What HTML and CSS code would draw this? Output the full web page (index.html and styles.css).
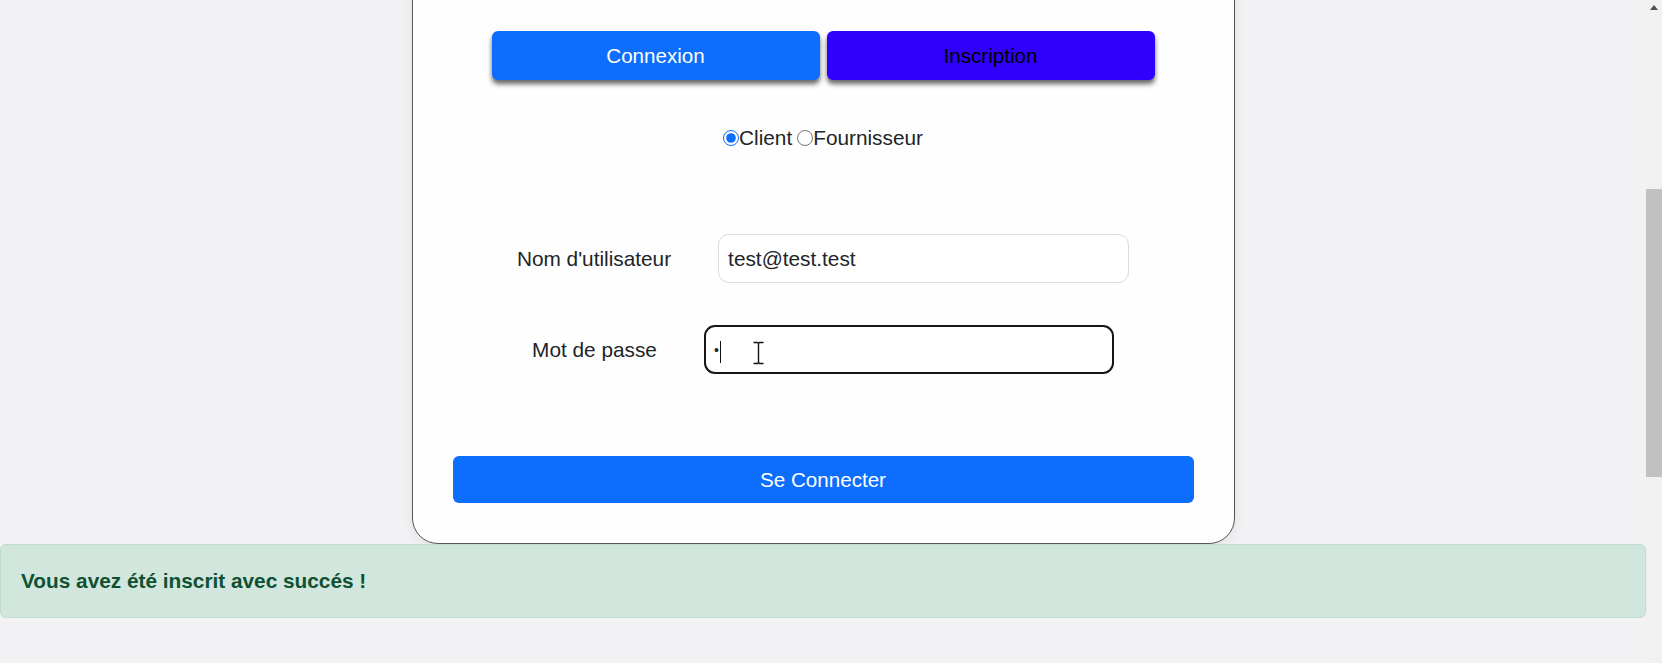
FILE: index.html
```html
<!DOCTYPE html>
<html lang="fr">
<head>
<meta charset="utf-8">
<title>Connexion</title>
<link rel="stylesheet" href="styles.css">
</head>
<body>
<div class="viewport">
  <div class="content">
    <div class="page">
      <div class="card">
        <div class="tabs">
          <button class="tab tab-login">Connexion</button>
          <button class="tab tab-signup">Inscription</button>
        </div>
        <div class="roles">
          <input type="radio" name="role" id="client" checked><label for="client">Client</label>
          <input type="radio" name="role" id="fournisseur"><label for="fournisseur">Fournisseur</label>
        </div>
        <div class="field field-user">
          <label class="field-label" for="user">Nom d'utilisateur</label>
          <input class="field-input" id="user" type="text" value="test@test.test">
        </div>
        <div class="field field-pass">
          <label class="field-label" for="pass">Mot de passe</label>
          <div class="input-wrap">
            <input class="field-input field-input-focus" id="pass" type="password" value="a">
            <span class="caret"></span>
            <svg class="ibeam" width="13" height="24" viewBox="0 0 13 24">
              <path d="M1.5 1.5h4l1 1 1-1h4M6.5 2.5v19M1.5 22.5h4l1-1 1 1h4" fill="none" stroke="#fff" stroke-width="3"/>
              <path d="M1.5 1.5h4l1 1 1-1h4M6.5 2.5v19M1.5 22.5h4l1-1 1 1h4" fill="none" stroke="#111" stroke-width="1.4"/>
            </svg>
          </div>
        </div>
        <button class="submit">Se Connecter</button>
      </div>
      <div class="alert">Vous avez été inscrit avec succés !</div>
    </div>
  </div>
  <div class="scrollbar">
    <div class="scroll-arrow"><span class="tri"></span></div>
    <div class="scroll-thumb"></div>
  </div>
</div>
</body>
</html>
```
FILE: styles.css
```css
* { box-sizing: border-box; }

html, body {
  margin: 0;
  padding: 0;
  height: 663px;
  overflow: hidden;
}

body {
  background: #f2f1f3;
  font-family: "Liberation Sans", Arial, sans-serif;
  font-size: 20.8px;
  color: #212529;
}

.viewport {
  display: flex;
  height: 663px;
}

.content {
  flex: 1;
  overflow: hidden;
}

/* simulates the scrolled position */
.page {
  margin-top: -40px;
}

.card {
  width: 50%;
  margin: 0 auto;
  background: #fefefe;
  border: 1px solid #555;
  border-radius: 26px;
  padding: 70px 40px 40px;
  box-shadow: 0 2px 12px rgba(0, 0, 0, 0.08);
}

.tabs {
  display: flex;
  justify-content: center;
  gap: 7px;
}

.tab {
  width: 328px;
  height: 49px;
  border: none;
  border-radius: 6px;
  font-family: inherit;
  font-size: 20.6px;
  box-shadow: 0 4px 5px rgba(0, 0, 0, 0.6);
  padding: 0;
}

.tab-login {
  background: #0d6efd;
  color: #fff;
}

.tab-signup {
  background: #3000ff;
  color: #000;
}

.roles {
  margin-top: 46px;
  height: 24px;
  display: flex;
  justify-content: center;
  align-items: center;
  line-height: 24px;
}

.roles input {
  margin: 0;
  width: 16px;
  height: 16px;
  accent-color: #0d6efd;
}

.roles label + input {
  margin-left: 5px;
}

.field {
  display: flex;
  justify-content: center;
  align-items: center;
  gap: 47px;
}

.field-user {
  margin-top: 84px;
}

.field-pass {
  margin-top: 42px;
}

.field-label {
  color: #212529;
}

.field-input {
  width: 411px;
  height: 49px;
  border: 1px solid #dcdcdc;
  border-radius: 11px;
  padding: 0 9px;
  font-family: inherit;
  font-size: 20.8px;
  color: #212529;
  background: #fff;
  outline: none;
}

.field-input-focus {
  width: 410px;
  border: 2px solid #161616;
  padding: 0 8px;
  font-size: 14px;
}

.input-wrap {
  position: relative;
}

.caret {
  position: absolute;
  left: 16px;
  top: 16px;
  width: 1px;
  height: 22px;
  background: #111;
}

.ibeam {
  position: absolute;
  left: 48px;
  top: 16px;
}

.submit {
  display: block;
  width: 100%;
  height: 47px;
  margin-top: 82px;
  border: none;
  border-radius: 6px;
  background: #0d6efd;
  color: #fff;
  font-family: inherit;
  font-size: 20.6px;
  padding: 0;
}

.alert {
  margin-top: 0;
  background: #d1e7dd;
  border: 1px solid #c0dccf;
  border-radius: 6px;
  padding: 20px 20px;
  line-height: 32px;
  color: #0f5132;
  font-weight: bold;
}

.scrollbar {
  width: 16px;
  background: #f1f1f1;
  display: flex;
  flex-direction: column;
}

.scroll-arrow {
  height: 16px;
  display: flex;
  justify-content: center;
  padding-top: 5px;
}

.tri {
  width: 0;
  height: 0;
  border-left: 4px solid transparent;
  border-right: 4px solid transparent;
  border-bottom: 5px solid #505050;
}

.scroll-thumb {
  margin-top: 173px;
  height: 288px;
  background: #c1c1c1;
}
```
